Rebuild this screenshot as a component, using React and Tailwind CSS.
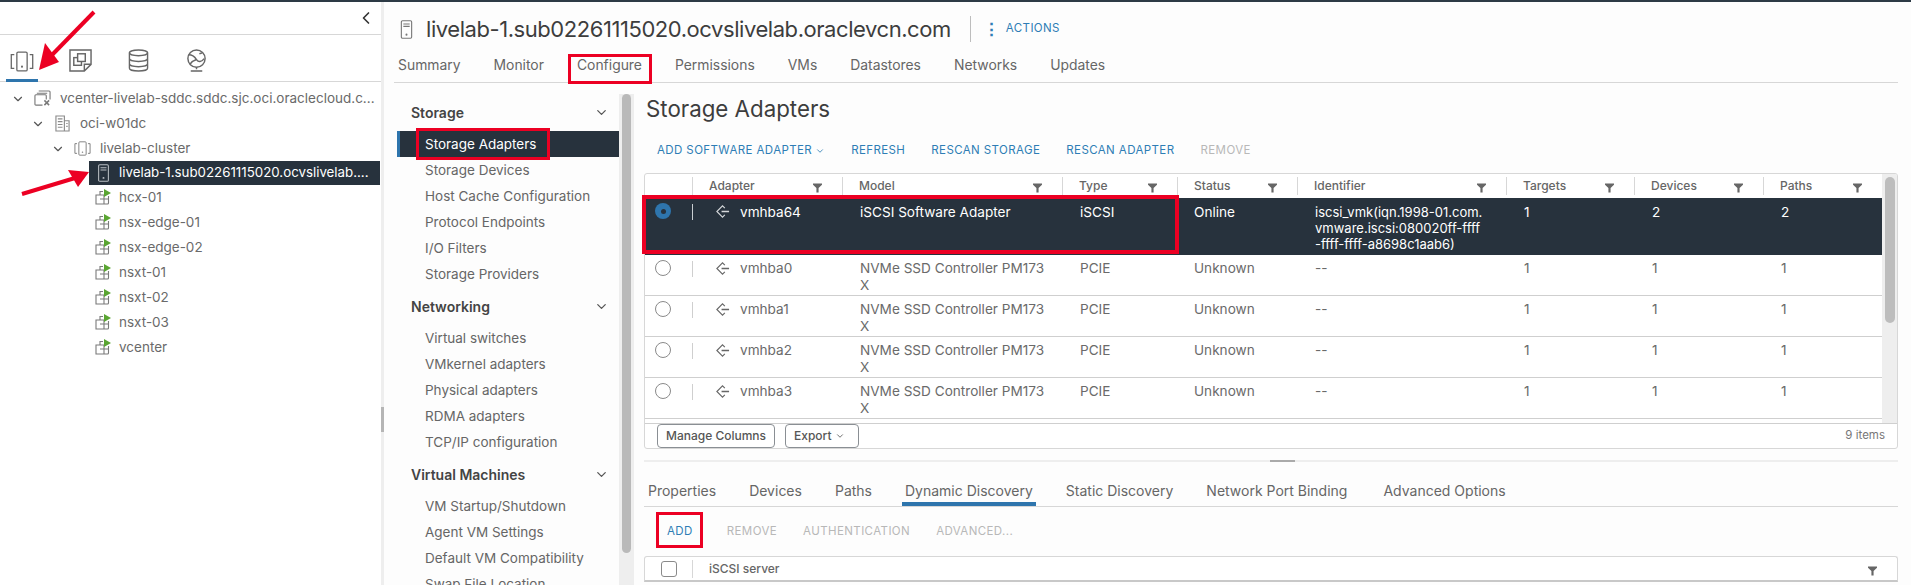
import React from 'react';
import { ChevronDown, ChevronLeft } from 'lucide-react';

const HostIcon = ({className}) => (
    <svg viewBox="0 0 16 24" className={className} fill="none" stroke="currentColor" strokeWidth="1.4">
        <rect x="1.5" y="1" width="13" height="22" rx="1.5" />
        <path d="M4 5h8M4 8h8" />
        <circle cx="8" cy="18.5" r="1.3" fill="currentColor" stroke="none" />
    </svg>
);

const ClusterIcon = ({className}) => (
    <svg viewBox="0 0 28 24" className={className} fill="none" stroke="currentColor" strokeWidth="1.5">
        <rect x="8" y="1" width="12" height="22" rx="1.5" />
        <circle cx="14" cy="18" r="1.2" fill="currentColor" stroke="none" />
        <path d="M5 4H1.5v16H5M23 4h3.500v16H23" />
    </svg>
);

const VmsTabIcon = ({className}) => (
    <svg viewBox="0 0 24 24" className={className} fill="none" stroke="currentColor" strokeWidth="1.5">
        <path d="M1 1h22v15l-7 7H1zM23 16h-7v7" />
        <rect x="5" y="9" width="8" height="8" />
        <rect x="9" y="5" width="8" height="8" fill="white" />
    </svg>
);

const StorageIcon = ({className}) => (
    <svg viewBox="0 0 22 24" className={className} fill="none" stroke="currentColor" strokeWidth="1.5">
        <ellipse cx="11" cy="4" rx="9.500" ry="3" />
        <path d="M1.500 4v16c0 1.700 4.300 3 9.500 3s9.500-1.300 9.500-3V4M1.500 10c0 1.700 4.300 3 9.500 3s9.500-1.300 9.500-3M1.500 15.500c0 1.700 4.300 3 9.500 3s9.500-1.300 9.500-3" />
    </svg>
);

const NetworkIcon = ({className}) => (
    <svg viewBox="0 0 24 24" className={className} fill="none" stroke="currentColor" strokeWidth="1.5">
        <circle cx="12" cy="10" r="9" />
        <path d="M4 6c4 0 6 2 8 5s5 3 8-1M5 16c2-3 4-4 7-5M15 5l3-1" />
        <path d="M12 19v2M6 23h12" />
    </svg>
);

const VcenterIcon = () => (
    <svg viewBox="0 0 18 18" className="w-[17px] h-[17px] text-[#7a7a7a]" fill="none" stroke="currentColor" strokeWidth="1.2">
        <path d="M5 1h11a1 1 0 0 1 1 1v8M3 3.500h11" />
        <path d="M9 16H2a1 1 0 0 1-1-1V6a1 1 0 0 1 1-1h10a1 1 0 0 1 1 1v4" />
        <path d="M11 11l5 5M16 11l-5 5" strokeWidth="1.600" />
    </svg>
);

const DatacenterIcon = () => (
    <svg viewBox="0 0 16 18" className="w-[15px] h-[17px] text-[#8a8a8a]" fill="none" stroke="currentColor" strokeWidth="1.2">
        <path d="M1 17V1h9v16zM10 6h5v11h-5" />
        <path d="M3 4h5M3 7h5M3 10h5M3 13h5M12 9h1.500M12 12h1.500" />
    </svg>
);

const VmIcon = () => (
    <span className="relative block w-[15px] h-[15px]">
        <svg viewBox="0 0 15 15" className="w-[15px] h-[15px] text-[#7a7a7a]" fill="none" stroke="currentColor" strokeWidth="1.1">
            <path d="M5 4.500V1.500h3M1 5h8v9H1zM5 9h8.500v4a1 1 0 0 1-1 1H9M13.500 9V6" />
        </svg>
        <svg viewBox="0 0 8 8" className="absolute -top-[1px] -right-[1px] w-[8px] h-[8px]">
            <path d="M1 0l7 4-7 4z" fill="#5aa532" />
        </svg>
    </span>
);

const FilterIcon = () => (
    <svg viewBox="0 0 10 10" className="w-[9px] h-[10px] text-[#666]">
        <path d="M0 0h10v1.500L6.200 5v5H3.800V5L0 1.500z" fill="currentColor" />
    </svg>
);

const AdapterIcon = () => (
    <svg viewBox="0 0 16 16" className="w-[15px] h-[15px]" fill="none" stroke="currentColor" strokeWidth="1.2">
        <path d="M10.500 4.500L8 2 2 8l6 6 2.500-2.500" />
        <path d="M7 8h8" strokeWidth="1.600" />
    </svg>
);

const treeRows = [
    {label: 'vcenter-livelab-sddc.sddc.sjc.oci.oraclecloud.c...', depth: 0, icon: <VcenterIcon />},
    {label: 'oci-w01dc', depth: 1, icon: <DatacenterIcon />},
    {label: 'livelab-cluster', depth: 2, icon: <ClusterIcon className="w-[18px] h-[15px] text-[#7a7a7a]" />},
];

const vms = ['hcx-01', 'nsx-edge-01', 'nsx-edge-02', 'nsxt-01', 'nsxt-02', 'nsxt-03', 'vcenter'];

const navGroups = [
    {title: 'Storage', items: ['Storage Adapters', 'Storage Devices', 'Host Cache Configuration', 'Protocol Endpoints', 'I/O Filters', 'Storage Providers']},
    {title: 'Networking', items: ['Virtual switches', 'VMkernel adapters', 'Physical adapters', 'RDMA adapters', 'TCP/IP configuration']},
    {title: 'Virtual Machines', items: ['VM Startup/Shutdown', 'Agent VM Settings', 'Default VM Compatibility', 'Swap File Location']},
];

const gridCols = 'grid grid-cols-[48px_150px_220px_115px_120px_209px_128px_129px_118px]';

const headers = ['Adapter', 'Model', 'Type', 'Status', 'Identifier', 'Targets', 'Devices', 'Paths'];

const adapters = ['vmhba0', 'vmhba1', 'vmhba2', 'vmhba3'];

const Sidebar = () => (
    <div className="w-[381px] shrink-0 bg-white">
        <div className="h-[33px] flex items-center justify-end pr-[5px] border-b border-[#d7d7d7]">
            <ChevronLeft className="w-[20px] h-[20px] text-[#333]" strokeWidth={2} />
        </div>
        <div className="h-[47px] flex border-b border-[#d7d7d7] pl-[6px]">
            <div className="w-[32px] h-[47px] flex items-center justify-center border-b-[3px] border-[#2e75ad] pt-[8px]">
                <ClusterIcon className="w-[24px] h-[21px] text-[#666]" />
            </div>
            <div className="w-[58px] flex items-center justify-center ml-[13px] pt-[5px] text-[#666]">
                <VmsTabIcon className="w-[23px] h-[23px]" />
            </div>
            <div className="w-[58px] flex items-center justify-center pt-[5px] text-[#666]">
                <StorageIcon className="w-[21px] h-[23px]" />
            </div>
            <div className="w-[58px] flex items-center justify-center pt-[5px] text-[#666]">
                <NetworkIcon className="w-[23px] h-[23px]" />
            </div>
        </div>
        <div className="pt-[4px] text-[13.5px] text-[#6a6a6a]">
            {treeRows.map(row => (
                <div key={row.label} className={`h-[25px] flex items-center ${row.depth === 0 ? 'pl-[11px]' : row.depth === 1 ? 'pl-[31px]' : 'pl-[51px]'}`}>
                    <ChevronDown className="w-[14px] h-[14px] text-[#555] mr-[9px]" />
                    <span className="w-[17px] flex justify-center mr-[9px]">{row.icon}</span>
                    <span className="whitespace-nowrap">{row.label}</span>
                </div>
            ))}
            <div className="h-[24px] ml-[89px] w-[291px] bg-[#27323d] text-white flex items-center pl-[8px]">
                <HostIcon className="w-[13px] h-[18px] text-[#b9bec3] mr-[9px]" />
                <span className="whitespace-nowrap text-[13.3px]">livelab-1.sub02261115020.ocvslivelab....</span>
            </div>
            {vms.map(vm => (
                <div key={vm} className="h-[25px] ml-[95px] flex items-center">
                    <VmIcon />
                    <span className="ml-[9px]">{vm}</span>
                </div>
            ))}
        </div>
    </div>
);

const ConfigNav = () => (
    <div className="relative w-[250px] shrink-0 h-[502px] overflow-hidden pl-[13px] pt-[10px]">
        {navGroups.map(group => (
            <div key={group.title} className="w-[222px]">
                <div className="h-[38px] flex items-center justify-between pl-[14px] pr-[10px] text-[14px] font-semibold text-[#444]">
                    <span>{group.title}</span>
                    <ChevronDown className="w-[15px] h-[15px] text-[#555]" />
                </div>
                {group.items.map(item => (
                    item === 'Storage Adapters' ? (
                        <div key={item} className="h-[26px] flex items-center pl-[25px] bg-[#27323d] border-l-[3px] border-[#2e75ad] text-[13.5px] text-white">{item}</div>
                    ) : (
                        <div key={item} className="h-[26px] flex items-center pl-[28px] text-[13.5px] text-[#666]">{item}</div>
                    )
                ))}
            </div>
        ))}
        <div className="absolute left-[235px] top-[11px] bottom-0 w-[15px] bg-[#eeeeee]">
            <div className="mx-[3px] w-[9px] h-[459px] rounded-full bg-[#b9b9b9]"></div>
        </div>
    </div>
);

const AdapterRow = ({name}) => (
    <div className={`${gridCols} h-[41px] border-b border-[#cfcfcf] text-[13.6px] text-[#6a6a6a] leading-[17px]`}>
        <div className="flex items-start pt-[5px] pl-[10px] relative">
            <span className="block w-[16px] h-[16px] rounded-full border border-[#8a8a8a] bg-white"></span>
            <span className="absolute right-0 top-[6px] h-[16px] border-l border-[#cfcfcf]"></span>
        </div>
        <div className="pt-[5px] pl-[22px] flex items-start gap-[10px]">
            <span className="pt-[1px] text-[#666]"><AdapterIcon /></span>
            <span>{name}</span>
        </div>
        <div className="pt-[5px] pl-[17px]">NVMe SSD Controller PM173<br />X</div>
        <div className="pt-[5px] pl-[17px]">PCIE</div>
        <div className="pt-[5px] pl-[16px]">Unknown</div>
        <div className="pt-[5px] pl-[17px]">--</div>
        <div className="pt-[5px] pl-[17px]">1</div>
        <div className="pt-[5px] pl-[17px]">1</div>
        <div className="pt-[5px] pl-[17px]">1</div>
    </div>
);

const AdaptersTable = () => (
    <div className="w-[1254px] h-[276px] border border-[#d7d7d7] rounded-[3px] bg-white overflow-hidden">
        <div className="flex h-[250px] border-b border-[#cfcfcf]">
            <div className="w-[1237px] shrink-0">
                <div className={`${gridCols} h-[24px] text-[12px] font-medium text-[#666]`}>
                    <div className="border-r border-[#d7d7d7] my-[3px]"></div>
                    {headers.map(header => (
                        <div key={header} className="relative my-[3px] pl-[16px] flex items-center border-r border-[#d7d7d7] last:border-r-0">
                            <span>{header}</span>
                            <span className="absolute right-[20px] top-[6px]"><FilterIcon /></span>
                        </div>
                    ))}
                </div>
                <div className={`${gridCols} h-[57px] bg-[#27323d] text-[13.6px] text-white leading-[16px]`}>
                    <div className="flex items-start pt-[5px] pl-[10px] relative">
                        <span className="w-[16px] h-[16px] rounded-full bg-[#2e75ad] flex items-center justify-center">
                            <span className="block w-[5px] h-[5px] rounded-full bg-[#27323d]"></span>
                        </span>
                        <span className="absolute right-0 top-[6px] h-[16px] border-l border-[#c9ced2]"></span>
                    </div>
                    <div className="pt-[6px] pl-[22px] flex items-start gap-[10px]">
                        <span className="text-[#d5d8db]"><AdapterIcon /></span>
                        <span>vmhba64</span>
                    </div>
                    <div className="pt-[6px] pl-[17px]">iSCSI Software Adapter</div>
                    <div className="pt-[6px] pl-[17px]">iSCSI</div>
                    <div className="pt-[6px] pl-[16px]">Online</div>
                    <div className="pt-[6px] pl-[17px] text-[13px]">iscsi_vmk(iqn.1998-01.com.<br />vmware.iscsi:080020ff-ffff<br />-ffff-ffff-a8698c1aab6)</div>
                    <div className="pt-[6px] pl-[17px]">1</div>
                    <div className="pt-[6px] pl-[17px]">2</div>
                    <div className="pt-[6px] pl-[17px]">2</div>
                </div>
                {adapters.map(name => <AdapterRow key={name} name={name} />)}
            </div>
            <div className="w-[16px] bg-[#eeeeee] pt-[3px]">
                <div className="mx-[3px] w-[10px] h-[146px] rounded-full bg-[#bdbdbd]"></div>
            </div>
        </div>
        <div className="h-[24px] flex items-center pl-[12px] pr-[12px] text-[12px] font-medium text-[#565656]">
            <button className="w-[118px] h-[24px] border border-[#8a8f94] rounded-[4px]">Manage Columns</button>
            <button className="w-[74px] h-[24px] border border-[#8a8f94] rounded-[4px] ml-[10px] flex items-center pl-[8px] gap-[3px]">
                Export <ChevronDown className="w-[10px] h-[10px]" />
            </button>
            <span className="ml-auto text-[11.5px] font-normal text-[#777]">9 items</span>
        </div>
    </div>
);

const ToolButton = ({children, muted, className}) => (
    <span className={`text-[11.5px] tracking-[0.4px] whitespace-nowrap ${muted ? 'text-[#b8b8b8]' : 'text-[#2e7db5]'} ${className || ''}`}>{children}</span>
);

const App = () => (
    <div className="relative w-[1911px] h-[585px] overflow-hidden bg-[#fdfdfd] font-['Inter','Liberation_Sans',sans-serif]">
        <div className="h-[2px] bg-[#2d3a45]"></div>
        <div className="flex h-[583px]">
            <Sidebar />
            <div className="relative w-[3px] shrink-0 bg-[#eeeeee]">
                <div className="absolute top-[405px] w-[3px] h-[25px] bg-[#b5b5b5]"></div>
            </div>
            <div className="flex-1 min-w-0">
                <div className="h-[52px] flex items-center pl-[16px] pt-[2px]">
                    <HostIcon className="w-[13px] h-[19px] text-[#777] mr-[13px]" />
                    <span className="text-[22px] tracking-[-0.44px] text-[#3d3d3d] whitespace-nowrap">livelab-1.sub02261115020.ocvslivelab.oraclevcn.com</span>
                    <span className="h-[26px] border-l border-[#bdbdbd] ml-[19px]"></span>
                    <span className="text-[#2e7db5] ml-[12px] text-[17px] font-bold leading-none">⋮</span>
                    <ToolButton className="ml-[6px]">ACTIONS</ToolButton>
                </div>
                <div className="relative h-[29px] ml-[10px] mr-[13px] pt-[1px] border-b border-[#d7d7d7] flex items-start gap-[33px] pl-[4px] text-[13.9px] text-[#666]">
                    <span>Summary</span>
                    <span>Monitor</span>
                    <span>Configure</span>
                    <span>Permissions</span>
                    <span>VMs</span>
                    <span>Datastores</span>
                    <span>Networks</span>
                    <span>Updates</span>
                </div>
                <div className="flex">
                    <ConfigNav />
                    <div className="flex-1 min-w-0 pl-[10px]">
                        <div className="h-[50px] flex items-center pl-[2px] pt-[2px] text-[22.3px] text-[#3d3d3d]">Storage Adapters</div>
                        <div className="h-[40px] flex items-center pl-[13px] pb-[4px] gap-[26px]">
                            <ToolButton className="flex items-center gap-[3px]">ADD SOFTWARE ADAPTER <ChevronDown className="w-[10px] h-[10px]" /></ToolButton>
                            <ToolButton>REFRESH</ToolButton>
                            <ToolButton>RESCAN STORAGE</ToolButton>
                            <ToolButton>RESCAN ADAPTER</ToolButton>
                            <ToolButton muted>REMOVE</ToolButton>
                        </div>
                        <AdaptersTable />
                        <div className="relative w-[1254px] h-[2px] mt-[11px] bg-[#eeeeee]">
                            <div className="absolute left-[626px] w-[25px] h-[2px] bg-[#aaaaaa]"></div>
                        </div>
                        <div className="w-[1254px] h-[45px] border-b border-[#d7d7d7] flex items-start pt-[18px] pl-[4px] text-[14px] text-[#666] relative">
                            <span className="mr-[33px]">Properties</span>
                            <span className="mr-[33px]">Devices</span>
                            <span className="mr-[33px]">Paths</span>
                            <span className="mr-[33px] relative">
                                Dynamic Discovery
                                <span className="absolute -left-[3px] -right-[3px] top-[22px] h-[4px] bg-[#2e75ad]"></span>
                            </span>
                            <span className="mr-[33px]">Static Discovery</span>
                            <span className="mr-[36px]">Network Port Binding</span>
                            <span>Advanced Options</span>
                        </div>
                        <div className="h-[49px] flex items-center pl-[23px] gap-[26px]">
                            <ToolButton className="mr-[8px]">ADD</ToolButton>
                            <ToolButton muted>REMOVE</ToolButton>
                            <ToolButton muted>AUTHENTICATION</ToolButton>
                            <ToolButton muted>ADVANCED...</ToolButton>
                        </div>
                        <div className="w-[1254px] h-[26px] border border-[#d7d7d7] border-b-[2px] border-b-[#c8c8c8] rounded-t-[3px] bg-white flex items-center relative text-[12px] font-medium text-[#666]">
                            <span className="block w-[16px] h-[16px] ml-[16px] border border-[#8a8a8a] rounded-[3px]"></span>
                            <span className="h-[18px] border-l border-[#d7d7d7] ml-[15px]"></span>
                            <span className="ml-[16px]">iSCSI server</span>
                            <span className="absolute right-[20px] top-[9px]"><FilterIcon /></span>
                        </div>
                    </div>
                </div>
            </div>
        </div>

        {/* red annotations drawn on top of the screenshot */}
        <div className="absolute left-[568px] top-[54px] w-[84px] h-[30px] border-[3px] border-[#ec0023]"></div>
        <div className="absolute left-[416px] top-[128px] w-[134px] h-[32px] border-[3px] border-[#ec0023]"></div>
        <div className="absolute left-[642px] top-[195px] w-[537px] h-[59px] border-[4px] border-[#ec0023]"></div>
        <div className="absolute left-[656px] top-[512px] w-[47px] h-[36px] border-[3px] border-[#ec0023]"></div>
        <svg className="absolute left-0 top-0 w-[120px] h-[200px]" viewBox="0 0 120 200">
            <path d="M94 12L50 57" stroke="#ec0023" strokeWidth="4" />
            <path d="M39 70L45 43L59 62z" fill="#ec0023" />
            <path d="M22 194L75 178" stroke="#ec0023" strokeWidth="4" />
            <path d="M89 172L68 170L78 187z" fill="#ec0023" />
        </svg>
    </div>
);

export default App;
